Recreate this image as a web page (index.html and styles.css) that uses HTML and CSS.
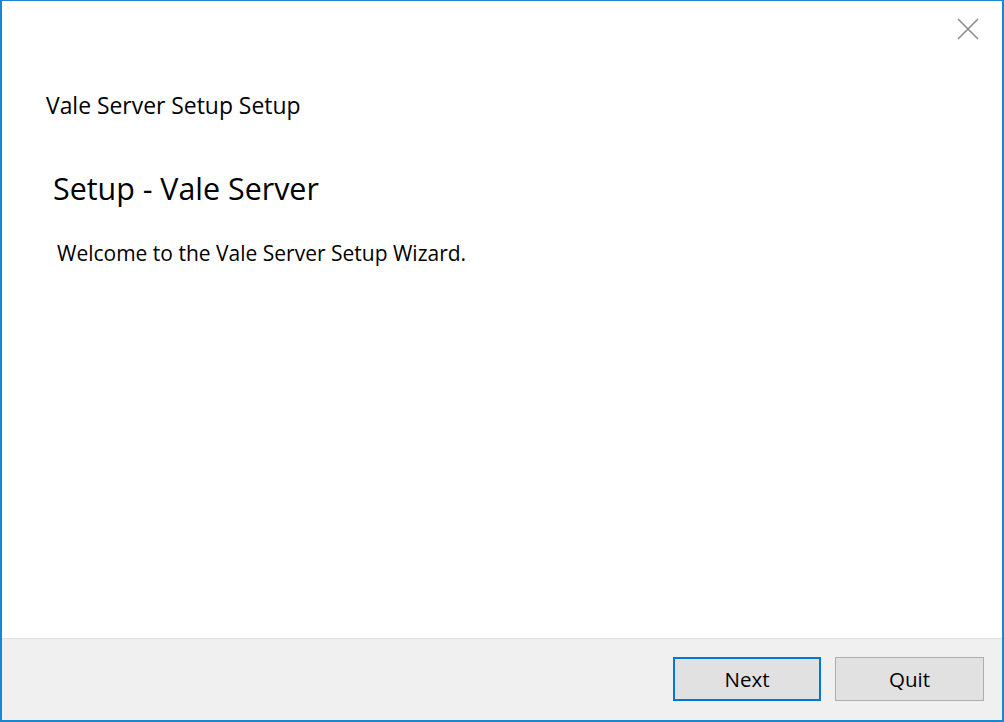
FILE: index.html
```html
<!DOCTYPE html>
<html>
<head>
<meta charset="utf-8">
<link rel="stylesheet" href="styles.css">
</head>
<body>
<div class="window">
  <div class="titlebar">
    <button class="close" aria-label="Close">
      <svg width="22" height="22" viewBox="0 0 22 22"><path d="M1 1 L21 21 M21 1 L1 21" stroke="#8c8c8c" stroke-width="1.6" fill="none"/></svg>
    </button>
  </div>
  <div class="content">
    <div class="wtitle">Vale Server Setup Setup</div>
    <h1 class="heading">Setup - Vale Server</h1>
    <p class="welcome">Welcome to the Vale Server Setup Wizard.</p>
  </div>
  <div class="footer">
    <button class="btn btn-default">Next</button>
    <button class="btn">Quit</button>
  </div>
</div>
</body>
</html>
```

FILE: styles.css
```css
html, body {
  margin: 0;
  padding: 0;
  background: #ffffff;
}
.window {
  width: 1004px;
  height: 722px;
  box-sizing: border-box;
  border-style: solid;
  border-color: #1a86d0;
  border-width: 1px 2px 2px 2px;
  display: flex;
  flex-direction: column;
  background: #ffffff;
  font-family: "Open Sans", "Noto Sans", sans-serif;
  color: #000000;
}
.titlebar {
  height: 56px;
  flex: none;
  display: flex;
  justify-content: flex-end;
  align-items: flex-start;
}
.close {
  margin: 17px 23px 0 0;
  padding: 0;
  border: none;
  background: transparent;
  width: 22px;
  height: 22px;
  display: flex;
}
.content {
  flex: 1;
  padding: 0 0 0 44px;
}
.wtitle {
  font-size: 22.9px;
  line-height: 32px;
  margin-top: 33px;
}
.heading {
  font-weight: normal;
  font-size: 30.4px;
  line-height: 40px;
  margin: 47px 0 0 7px;
}
.welcome {
  font-size: 21px;
  line-height: 28px;
  margin: 30px 0 0 11px;
}
.footer {
  flex: none;
  height: 82px;
  box-sizing: border-box;
  background: #f0f0f0;
  border-top: 1px solid #dfdfdf;
  display: flex;
  justify-content: flex-end;
  align-items: flex-start;
  gap: 14px;
  padding: 18px 18px 0 0;
}
.btn {
  width: 149px;
  height: 44px;
  box-sizing: border-box;
  background: #e1e1e1;
  border: 1px solid #adadad;
  font-family: "Open Sans", "Noto Sans", sans-serif;
  font-size: 20.5px;
  color: #000;
  padding: 0;
}
.btn-default {
  width: 148px;
  border: 2px solid #0078d7;
}
```
